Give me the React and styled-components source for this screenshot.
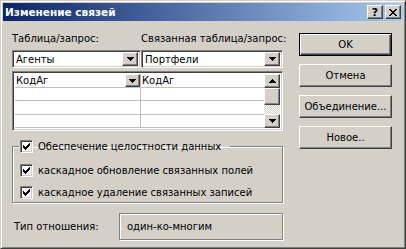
import styled, { createGlobalStyle } from "styled-components";

const GlobalStyle = createGlobalStyle`
  html, body {
    margin: 0;
    padding: 0;
    background: #d4d0c8;
  }
  body {
    font-family: "DejaVu Sans", "Liberation Sans", sans-serif;
    font-size: 10px;
    color: #000;
  }
  * {
    box-sizing: border-box;
  }
`;

const FACE = "#d4d0c8";
const FONT = `"DejaVu Sans", "Liberation Sans", sans-serif`;

const raised = `
  border: 1px solid;
  border-color: #fff #404040 #404040 #fff;
  box-shadow: inset -1px -1px #808080;
  background: ${FACE};
`;

const sunken = `
  border: 1px solid;
  border-color: #808080 #fff #fff #808080;
  box-shadow: inset 1px 1px #404040, inset -1px -1px ${FACE};
`;

const etched = `
  border: 1px solid #808080;
  box-shadow: inset 1px 1px #fff, 1px 1px #fff;
`;

const DownArrow = () => (
  <svg width="7" height="4" viewBox="0 0 7 4" shapeRendering="crispEdges">
    <path d="M0 0h7v1H0zM1 1h5v1H1zM2 2h3v1H2zM3 3h1v1H3z" fill="#000" />
  </svg>
);

const UpArrow = () => (
  <svg width="7" height="4" viewBox="0 0 7 4" shapeRendering="crispEdges">
    <path d="M3 0h1v1H3zM2 1h3v1H2zM1 2h5v1H1zM0 3h7v1H0z" fill="#000" />
  </svg>
);

const CheckMark = () => (
  <svg width="7" height="7" viewBox="0 0 7 7" shapeRendering="crispEdges">
    <path
      d="M0 2h1v3H0zM1 3h1v3H1zM2 4h1v3H2zM3 3h1v3H3zM4 2h1v3H4zM5 1h1v3H5zM6 0h1v3H6z"
      fill="#000"
    />
  </svg>
);

const Window = styled.div`
  width: 406px;
  height: 249px;
  background: ${FACE};
  border: 1px solid;
  border-color: ${FACE} #404040 #404040 ${FACE};
  box-shadow: inset 1px 1px #fff, inset -1px -1px #808080;
  padding: 2px;
  display: flex;
  flex-direction: column;
`;

const TitleBar = styled.div`
  height: 18px;
  flex: none;
  display: flex;
  align-items: center;
  padding: 0 2px 0 2px;
  background: linear-gradient(to right, #0a246a, #a6caf0);
  color: #fff;
  font-weight: bold;
  font-size: 10.5px;
`;

const Title = styled.span`
  flex: 1;
  white-space: nowrap;
`;

const TitleButton = styled.button`
  ${raised};
  width: 16px;
  height: 14px;
  padding: 0;
  margin-left: ${({ $gap }) => $gap || 0}px;
  display: flex;
  align-items: center;
  justify-content: center;
  font-family: ${FONT};
  font-weight: bold;
  font-size: 11px;
  line-height: 1;
  color: #000;
`;

const Body = styled.div`
  flex: 1;
  display: flex;
  gap: 16px;
  padding: 11px 0 0 9px;
`;

const LeftPane = styled.div`
  width: 271px;
  display: flex;
  flex-direction: column;
`;

const TwoCols = styled.div`
  display: grid;
  grid-template-columns: 129px 142px;
  margin-top: ${({ $top }) => $top || 0}px;
`;

const Label = styled.div`
  height: 13px;
  line-height: 13px;
  white-space: nowrap;
`;

const Combo = styled.div`
  ${sunken};
  height: 18px;
  background: #fff;
  display: flex;
  align-items: center;
  padding: 2px 2px 2px 3px;
`;

const ComboText = styled.span`
  flex: 1;
  white-space: nowrap;
`;

const DropButton = styled.div`
  ${raised};
  width: ${({ $w }) => $w || 16}px;
  height: ${({ $h }) => $h || 14}px;
  flex: none;
  display: flex;
  align-items: center;
  justify-content: center;
`;

const Grid = styled.div`
  ${sunken};
  margin-top: 3px;
  height: 60px;
  background: #fff;
  display: flex;
  padding: 2px;
`;

const Rows = styled.div`
  flex: 1;
  display: flex;
  flex-direction: column;
`;

const Row = styled.div`
  height: 14px;
  display: grid;
  grid-template-columns: 126px 1fr;
  border-bottom: 1px solid #c0c0c0;
`;

const Cell = styled.div`
  display: flex;
  align-items: center;
  padding-left: 1px;
  border-right: ${({ $divider }) => ($divider ? "1px solid #c0c0c0" : "none")};
  white-space: nowrap;
`;

const CellText = styled.span`
  flex: 1;
`;

const ScrollBar = styled.div`
  width: 16px;
  display: flex;
  flex-direction: column;
`;

const ScrollButton = styled.div`
  ${raised};
  height: ${({ $h }) => $h}px;
  display: flex;
  align-items: center;
  justify-content: center;
`;

const ScrollTrack = styled.div`
  flex: 1;
  background: repeating-conic-gradient(#fff 0 25%, ${FACE} 0 50%) 0 0 / 2px 2px;
`;

const Group = styled.fieldset`
  ${etched};
  margin: 9px 0 0;
  padding: 11px 6px 3px 7px;
  display: flex;
  flex-direction: column;
  gap: 9px;
  min-width: 0;
`;

const Legend = styled.legend`
  padding: 0 9px 0 1px;
  margin-left: -1px;
`;

const CheckRow = styled.label`
  display: flex;
  align-items: center;
  gap: 5px;
  height: 13px;
  white-space: nowrap;
`;

const CheckBox = styled.span`
  ${sunken};
  width: 13px;
  height: 13px;
  flex: none;
  background: #fff;
  display: flex;
  align-items: center;
  justify-content: center;
`;

const TypeRow = styled.div`
  display: flex;
  align-items: center;
  margin-top: 10px;
`;

const TypeLabel = styled.div`
  width: 107px;
  padding-left: 2px;
`;

const TypeBox = styled.div`
  ${etched};
  width: 164px;
  height: 27px;
  display: flex;
  align-items: center;
  padding-left: 7px;
`;

const RightPane = styled.div`
  width: 93px;
  display: flex;
  flex-direction: column;
  gap: 8px;
  padding-top: 1px;
`;

const PushButton = styled.button`
  height: 23px;
  width: 93px;
  padding: 0;
  font-family: ${FONT};
  font-size: 10px;
  color: #000;
  background: ${FACE};
  border: 1px solid;
  border-color: ${({ $default }) =>
    $default ? "#000" : "#fff #404040 #404040 #fff"};
  box-shadow: ${({ $default }) =>
    $default
      ? "inset 1px 1px #fff, inset -1px -1px #404040, inset -2px -2px #808080"
      : "inset -1px -1px #808080"};
`;

const Check = ({ children }) => (
  <CheckRow>
    <CheckBox>
      <CheckMark />
    </CheckBox>
    {children}
  </CheckRow>
);

export default function App() {
  return (
    <>
      <GlobalStyle />
      <Window>
        <TitleBar>
          <Title>Изменение связей</Title>
          <TitleButton>?</TitleButton>
          <TitleButton $gap={2}>
            <svg width="8" height="7" viewBox="0 0 8 7" shapeRendering="crispEdges">
              <path
                d="M0 0h2v1H0zM6 0h2v1H6zM1 1h2v1H1zM5 1h2v1H5zM2 2h4v1H2zM3 3h2v1H3zM2 4h4v1H2zM1 5h2v1H1zM5 5h2v1H5zM0 6h2v1H0zM6 6h2v1H6z"
                fill="#000"
              />
            </svg>
          </TitleButton>
        </TitleBar>
        <Body>
          <LeftPane>
            <TwoCols>
              <Label>Таблица/запрос:</Label>
              <Label>Связанная таблица/запрос:</Label>
            </TwoCols>
            <TwoCols $top={5}>
              <Combo>
                <ComboText>Агенты</ComboText>
                <DropButton>
                  <DownArrow />
                </DropButton>
              </Combo>
              <Combo>
                <ComboText>Портфели</ComboText>
                <DropButton>
                  <DownArrow />
                </DropButton>
              </Combo>
            </TwoCols>
            <Grid>
              <Rows>
                <Row>
                  <Cell $divider>
                    <CellText>КодАг</CellText>
                    <DropButton $w={15} $h={13}>
                      <DownArrow />
                    </DropButton>
                  </Cell>
                  <Cell>КодАг</Cell>
                </Row>
                <Row>
                  <Cell $divider />
                  <Cell />
                </Row>
                <Row>
                  <Cell $divider />
                  <Cell />
                </Row>
                <Row>
                  <Cell $divider />
                  <Cell />
                </Row>
              </Rows>
              <ScrollBar>
                <ScrollButton $h={14}>
                  <UpArrow />
                </ScrollButton>
                <ScrollButton $h={17} />
                <ScrollTrack />
                <ScrollButton $h={14}>
                  <DownArrow />
                </ScrollButton>
              </ScrollBar>
            </Grid>
            <Group>
              <Legend>
                <Check>Обеспечение целостности данных</Check>
              </Legend>
              <Check>каскадное обновление связанных полей</Check>
              <Check>каскадное удаление связанных записей</Check>
            </Group>
            <TypeRow>
              <TypeLabel>Тип отношения:</TypeLabel>
              <TypeBox>один-ко-многим</TypeBox>
            </TypeRow>
          </LeftPane>
          <RightPane>
            <PushButton $default>OK</PushButton>
            <PushButton>Отмена</PushButton>
            <PushButton>Объединение...</PushButton>
            <PushButton>Новое..</PushButton>
          </RightPane>
        </Body>
      </Window>
    </>
  );
}
